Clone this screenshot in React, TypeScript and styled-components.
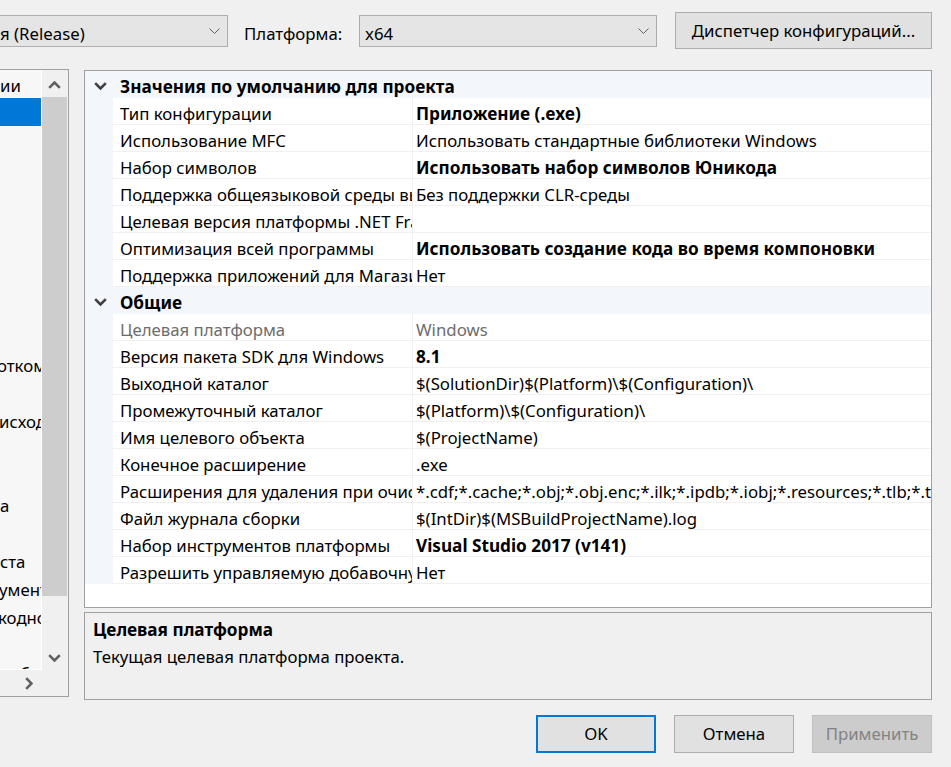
import React from "react";
import styled, { createGlobalStyle, css } from "styled-components";

const GlobalStyle = createGlobalStyle`
  html, body {
    margin: 0;
    padding: 0;
    background: #f0f0f0;
    overflow: hidden;
  }
  body {
    font-family: "Noto Sans", "Open Sans", sans-serif;
    font-size: 16.8px;
    color: #000;
  }
  * { box-sizing: border-box; }
`;

const boldText = css`
  font-weight: 700;
  font-size: 17.2px;
`;

const Page = styled.div`
  width: 951px;
  height: 767px;
  display: flex;
  flex-direction: column;
  overflow: hidden;
`;

/* ---------- top toolbar ---------- */
const Toolbar = styled.div`
  display: flex;
  align-items: center;
  height: 37px;
  margin-top: 12px;
`;

const Combo = styled.div<{ $width: number; $offset?: number }>`
  width: ${(p) => p.$width}px;
  margin-left: ${(p) => p.$offset ?? 0}px;
  height: 32px;
  flex: none;
  display: flex;
  align-items: center;
  background: #e5e5e5;
  border: 1px solid #adadad;
  padding: 0 7px 0 5px;
  white-space: nowrap;
`;

const ComboText = styled.span`
  flex: 1;
  overflow: hidden;
  padding-top: 5px;
`;

const Label = styled.span`
  width: 115px;
  flex: none;
  margin-left: 16px;
  padding-top: 5px;
  white-space: nowrap;
`;

const Button = styled.button<{ $width: number; $variant?: "default" | "primary" | "disabled" }>`
  width: ${(p) => p.$width}px;
  height: 37px;
  flex: none;
  font: inherit;
  color: #000;
  background: #e1e1e1;
  border: 1px solid #adadad;
  padding: 0 0 1px;
  white-space: nowrap;
  ${(p) =>
    p.$variant === "primary" &&
    css`
      border: 2px solid #0078d7;
    `}
  ${(p) =>
    p.$variant === "disabled" &&
    css`
      background: #cccccc;
      border-color: #bfbfbf;
      color: #838383;
    `}
`;

const TopButton = styled(Button)`
  margin-left: 18px;
`;

/* ---------- main area ---------- */
const Main = styled.div`
  display: grid;
  grid-template-columns: 69px 848px;
  column-gap: 15px;
  margin-top: 21px;
  align-items: start;
`;

const LeftPanel = styled.div`
  margin-top: -1px;
  height: 628px;
  border-top: 1px solid #a0a0a0;
  border-right: 1px solid #a0a0a0;
  border-bottom: 1px solid #a0a0a0;
  display: grid;
  grid-template-columns: 42px 26px;
  grid-template-rows: 600px 26px;
`;

const TreeList = styled.div`
  background: #f7f7f7;
  border-right: 1px solid #ffffff;
  border-bottom: 1px solid #ffffff;
  overflow: hidden;
  display: flex;
  flex-direction: column;
`;

const TreeItem = styled.div<{ $selected?: boolean }>`
  height: 28px;
  flex: none;
  display: flex;
  align-items: center;
  white-space: nowrap;
  overflow: hidden;
  background: ${(p) => (p.$selected ? "#0078d7" : "transparent")};
  color: ${(p) => (p.$selected ? "#fff" : "#000")};
`;

const TreeText = styled.span<{ $shift: number }>`
  margin-left: ${(p) => p.$shift}px;
  padding-top: 2px;
`;

const VScroll = styled.div`
  background: #f0f0f0;
  display: flex;
  flex-direction: column;
  padding-right: 1px;
`;

const ScrollButton = styled.div`
  height: 27px;
  flex: none;
  display: flex;
  align-items: center;
  justify-content: center;
  padding-top: 2px;
`;

const Thumb = styled.div`
  height: 499px;
  flex: none;
  background: #cdcdcd;
`;

const Track = styled.div`
  flex: 1;
`;

const HScroll = styled.div`
  background: #f0f0f0;
  display: flex;
  justify-content: flex-end;
`;

const HScrollButton = styled.div`
  width: 26px;
  display: flex;
  align-items: center;
  justify-content: center;
  padding-top: 1px;
`;

const Corner = styled.div`
  background: #f0f0f0;
`;

const RightColumn = styled.div`
  display: flex;
  flex-direction: column;
  gap: 4px;
`;

const PropGrid = styled.div`
  height: 538px;
  background: #fff;
  border: 1px solid #a0a0a0;
  overflow: hidden;
`;

const CategoryRow = styled.div`
  height: 27px;
  display: grid;
  grid-template-columns: 28px 1fr;
  align-items: center;
  background: #f3f6fb;
`;

const CategoryToggle = styled.div`
  display: flex;
  align-items: center;
  justify-content: center;
  padding: 3px 0 0 3px;
`;

const CategoryTitle = styled.div`
  ${boldText};
  padding: 4px 0 0 7px;
  white-space: nowrap;
`;

const PropRow = styled.div<{ $disabled?: boolean }>`
  height: 27px;
  display: grid;
  grid-template-columns: 28px 299px 1fr;
  color: ${(p) => (p.$disabled ? "#6d6d6d" : "#000")};
`;

const Margin = styled.div`
  background: #f3f6fb;
`;

const Cell = styled.div<{ $value?: boolean; $bold?: boolean }>`
  display: flex;
  align-items: center;
  border-bottom: 1px solid #f0f0f0;
  padding-left: ${(p) => (p.$value ? 3 : 7)}px;
  padding-top: 4px;
  white-space: nowrap;
  overflow: hidden;
  ${(p) => p.$bold && boldText};
  ${(p) =>
    p.$value &&
    css`
      border-left: 1px solid #f0f0f0;
    `}
`;

const Description = styled.div`
  height: 88px;
  border: 1px solid #a0a0a0;
  background: #f0f0f0;
  padding: 5px 8px;
  display: flex;
  flex-direction: column;
  gap: 3px;
`;

const DescTitle = styled.div`
  ${boldText};
  line-height: 24px;
`;

const DescText = styled.div`
  line-height: 24px;
`;

const Footer = styled.div`
  display: flex;
  justify-content: flex-end;
  gap: 18px;
  margin-top: 15px;
  padding-right: 19px;
`;

const FooterButton = styled(Button)`
  height: 38px;
`;

/* ---------- icons ---------- */
const ComboChevron = () => (
  <svg width="11" height="6" viewBox="0 0 11 6">
    <path d="M0.5 0.5 L5.5 5.5 L10.5 0.5" fill="none" stroke="#606060" strokeWidth="1" />
  </svg>
);

const ExpandChevron = () => (
  <svg width="13" height="8" viewBox="0 0 13 8">
    <path d="M1.2 1.2 L6.5 6.5 L11.8 1.2" fill="none" stroke="#404040" strokeWidth="2.6" />
  </svg>
);

const ArrowUp = () => (
  <svg width="13" height="8" viewBox="0 0 13 8">
    <path d="M1.2 6.8 L6.5 1.5 L11.8 6.8" fill="none" stroke="#606060" strokeWidth="2.6" />
  </svg>
);

const ArrowDown = () => (
  <svg width="13" height="8" viewBox="0 0 13 8">
    <path d="M1.2 1.2 L6.5 6.5 L11.8 1.2" fill="none" stroke="#606060" strokeWidth="2.6" />
  </svg>
);

const ArrowRight = () => (
  <svg width="8" height="13" viewBox="0 0 8 13">
    <path d="M1.2 1.2 L6.5 6.5 L1.2 11.8" fill="none" stroke="#606060" strokeWidth="2.6" />
  </svg>
);

/* ---------- data ---------- */
type Prop = { name: string; value: string; bold?: boolean; disabled?: boolean };

const general1: Prop[] = [
  { name: "Тип конфигурации", value: "Приложение (.exe)", bold: true },
  { name: "Использование MFC", value: "Использовать стандартные библиотеки Windows" },
  { name: "Набор символов", value: "Использовать набор символов Юникода", bold: true },
  { name: "Поддержка общеязыковой среды выполнения (CLR)", value: "Без поддержки CLR-среды" },
  { name: "Целевая версия платформы .NET Framework", value: "" },
  { name: "Оптимизация всей программы", value: "Использовать создание кода во время компоновки", bold: true },
  { name: "Поддержка приложений для Магазина Windows", value: "Нет" },
];

const general2: Prop[] = [
  { name: "Целевая платформа", value: "Windows", disabled: true },
  { name: "Версия пакета SDK для Windows", value: "8.1", bold: true },
  { name: "Выходной каталог", value: "$(SolutionDir)$(Platform)\\$(Configuration)\\" },
  { name: "Промежуточный каталог", value: "$(Platform)\\$(Configuration)\\" },
  { name: "Имя целевого объекта", value: "$(ProjectName)" },
  { name: "Конечное расширение", value: ".exe" },
  {
    name: "Расширения для удаления при очистке",
    value:
      "*.cdf;*.cache;*.obj;*.obj.enc;*.ilk;*.ipdb;*.iobj;*.resources;*.tlb;*.tli;*.tlh;*.tmp;*.rsp;*.pgc;*.pgd;*.meta;*.tlog;*.manifest;*.res;*.pch;*.exp;*.idb;*.rep;*.xdc;*.pdb;*_manifest.rc;*.bsc;*.sbr;*.xml;*.metagen;*.bi",
  },
  { name: "Файл журнала сборки", value: "$(IntDir)$(MSBuildProjectName).log" },
  { name: "Набор инструментов платформы", value: "Visual Studio 2017 (v141)", bold: true },
  { name: "Разрешить управляемую добавочную сборку", value: "Нет" },
];

type TreeRow = { text: string; shift: number; selected?: boolean };
const treeRows: TreeRow[] = [
  { text: "ии", shift: 0 },
  { text: "", shift: 0, selected: true },
  ...Array.from({ length: 8 }, () => ({ text: "", shift: 0 })),
  { text: "откомпил", shift: -3 },
  { text: "", shift: 0 },
  { text: "исходного", shift: -1 },
  { text: "", shift: 0 },
  { text: "", shift: 0 },
  { text: "а", shift: 0 },
  { text: "", shift: 0 },
  { text: "ста", shift: 0 },
  { text: "умента", shift: -1 },
  { text: "кодной", shift: -2 },
  { text: "", shift: 0 },
  { text: "б", shift: 20 },
];

const Category = ({ title, items }: { title: string; items: Prop[] }) => (
  <>
    <CategoryRow>
      <CategoryToggle>
        <ExpandChevron />
      </CategoryToggle>
      <CategoryTitle>{title}</CategoryTitle>
    </CategoryRow>
    {items.map((p) => (
      <PropRow key={p.name} $disabled={p.disabled}>
        <Margin />
        <Cell>{p.name}</Cell>
        <Cell $value $bold={p.bold}>
          {p.value}
        </Cell>
      </PropRow>
    ))}
  </>
);

export default function App() {
  return (
    <Page>
      <GlobalStyle />
      <Toolbar>
        <Combo $width={301} $offset={-73}>
          <ComboText>Активная (Release)</ComboText>
          <ComboChevron />
        </Combo>
        <Label>Платформа:</Label>
        <Combo $width={298}>
          <ComboText>x64</ComboText>
          <ComboChevron />
        </Combo>
        <TopButton $width={257}>Диспетчер конфигураций...</TopButton>
      </Toolbar>

      <Main>
        <LeftPanel>
          <TreeList>
            {treeRows.map((r, i) => (
              <TreeItem key={i} $selected={r.selected}>
                <TreeText $shift={r.shift}>{r.text}</TreeText>
              </TreeItem>
            ))}
          </TreeList>
          <VScroll>
            <ScrollButton>
              <ArrowUp />
            </ScrollButton>
            <Thumb />
            <Track />
            <ScrollButton>
              <ArrowDown />
            </ScrollButton>
          </VScroll>
          <HScroll>
            <HScrollButton>
              <ArrowRight />
            </HScrollButton>
          </HScroll>
          <Corner />
        </LeftPanel>

        <RightColumn>
          <PropGrid>
            <Category title="Значения по умолчанию для проекта" items={general1} />
            <Category title="Общие" items={general2} />
          </PropGrid>
          <Description>
            <DescTitle>Целевая платформа</DescTitle>
            <DescText>Текущая целевая платформа проекта.</DescText>
          </Description>
        </RightColumn>
      </Main>

      <Footer>
        <FooterButton $width={120} $variant="primary">
          OK
        </FooterButton>
        <FooterButton $width={120}>Отмена</FooterButton>
        <FooterButton $width={120} $variant="disabled">
          Применить
        </FooterButton>
      </Footer>
    </Page>
  );
}
